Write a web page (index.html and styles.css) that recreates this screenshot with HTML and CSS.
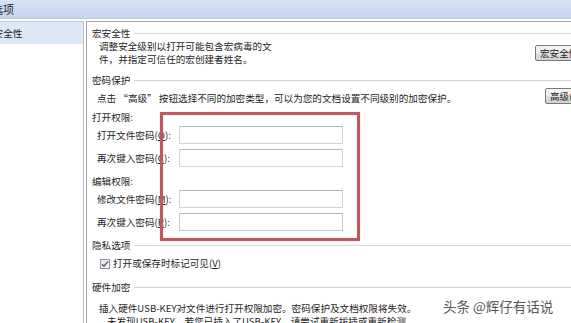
FILE: index.html
```html
<!DOCTYPE html>
<html lang="zh-CN">
<head>
<meta charset="utf-8">
<title>选项</title>
<link rel="stylesheet" href="styles.css">
</head>
<body>
<div class="window">
  <div class="titlebar"><span class="title">选项</span></div>
  <div class="main">
    <aside class="sidebar">
      <div class="nav-item active"><span class="nav-text">宏安全性</span></div>
    </aside>
    <section class="panel">
      <div class="group-title">宏安全性</div>
      <div class="macro-row">
        <p class="desc">调整安全级别以打开可能包含宏病毒的文<br>件，并指定可信任的宏创建者姓名。</p>
        <button class="btn btn-macro">宏安全性(<u>S</u>)...</button>
      </div>

      <div class="group-title gt-gap">密码保护</div>
      <div class="pw-row">
        <p class="pw-desc">点击 “高级” 按钮选择不同的加密类型，可以为您的文档设置不同级别的加密保护。</p>
        <button class="btn btn-adv">高级(<u>A</u>)...</button>
      </div>

      <div class="sub-title">打开权限:</div>
      <div class="form-row first">
        <label class="field-label">打开文件密码(<u>O</u>):</label>
        <input class="field" type="password">
      </div>
      <div class="form-row">
        <label class="field-label">再次键入密码(<u>C</u>):</label>
        <input class="field" type="password">
      </div>

      <div class="sub-title sub-gap">编辑权限:</div>
      <div class="form-row first">
        <label class="field-label">修改文件密码(<u>M</u>):</label>
        <input class="field" type="password">
      </div>
      <div class="form-row">
        <label class="field-label">再次键入密码(<u>R</u>):</label>
        <input class="field focus" type="password">
      </div>

      <div class="group-title gt-gap">隐私选项</div>
      <div class="check-row">
        <span class="checkbox">
          <svg width="8" height="8" viewBox="0 0 8 8"><path d="M1 4.2 L3 6.3 L7 1.4" fill="none" stroke="#4a5d7e" stroke-width="1.4"/></svg>
        </span>
        <span>打开或保存时标记可见(<u>V</u>)</span>
      </div>

      <div class="group-title hw-gap">硬件加密</div>
      <p class="usb-desc">插入硬件USB-KEY对文件进行打开权限加密。密码保护及文档权限将失效。</p>
      <p class="usb-desc second">未发现USB-KEY，若您已插入了USB-KEY，请尝试重新拔插或重新检测。</p>
    </section>
  </div>
  <div class="annot"></div>
  <div class="watermark">头条 @辉仔有话说</div>
</div>
</body>
</html>
```

FILE: styles.css
```css
* { box-sizing: border-box; }

body {
  margin: 0;
  width: 571px;
  height: 323px;
  overflow: hidden;
  background: #ffffff;
  font-family: "Noto Sans CJK SC", "Noto Sans", sans-serif;
  font-size: 9.6px;
  color: #1e1e1e;
}

.window {
  position: relative;
  width: 620px;
  height: 323px;
  background: #ffffff;
}

.titlebar {
  height: 19px;
  background: linear-gradient(#d7e4f3, #c3d6ec);
  border-bottom: 1px solid #b9cadd;
  display: flex;
  align-items: center;
  white-space: nowrap;
}

.title {
  margin-left: -8px;
  font-size: 11px;
  line-height: 16px;
  color: #1e1e1e;
}

.main {
  display: flex;
  gap: 2px;
  padding-top: 2px;
}

.sidebar {
  width: 84px;
  height: 320px;
  border-top: 1px solid #c3c8ce;
  border-right: 1px solid #b9bec4;
}

.nav-item {
  height: 22px;
  line-height: 22px;
  white-space: nowrap;
}

.nav-item.active {
  background: #dce8f6;
}

.nav-text {
  display: inline-block;
  margin-left: -16px;
}

.panel {
  flex: 1;
  border-top: 1px solid #a3a3a3;
  border-left: 1px solid #a3a3a3;
  padding: 5px 15px 0 5px;
  display: flex;
  flex-direction: column;
}

.group-title {
  display: flex;
  align-items: center;
  gap: 4px;
  height: 13px;
  line-height: 13px;
  white-space: nowrap;
}

.group-title::after {
  content: "";
  flex: 1;
  height: 1px;
  background: #d3d6d9;
}

.gt-gap { margin-top: 8px; }
.hw-gap { margin-top: 11px; }

.macro-row {
  display: flex;
  align-items: center;
  justify-content: space-between;
  height: 26px;
  padding-left: 7px;
}

.desc {
  margin: 0;
  line-height: 13px;
}

.btn {
  font-family: inherit;
  font-size: 9.6px;
  color: #1e1e1e;
  height: 16px;
  padding: 0 4px;
  text-align: left;
  white-space: nowrap;
  border: 1px solid #7a7a7a;
  border-radius: 2px;
  background: linear-gradient(#f4f4f4, #ececec 50%, #dedede 50%, #d2d2d2);
  line-height: 14px;
}

.btn-macro { width: 70px; }
.btn-adv { width: 62px; margin-right: -2px; }

.pw-row {
  display: flex;
  align-items: flex-start;
  justify-content: space-between;
  height: 17px;
  margin-top: 1px;
  padding-left: 5px;
}

.pw-desc {
  margin: 4px 0 0;
  line-height: 13px;
  white-space: nowrap;
}

.sub-title {
  height: 13px;
  line-height: 13px;
  margin-top: 6px;
}

.sub-gap { margin-top: 8px; }

.form-row {
  display: flex;
  align-items: center;
  height: 18px;
  margin-top: 5px;
  padding-left: 5px;
}

.form-row.first { margin-top: 2px; }

.field-label {
  width: 82px;
  line-height: 18px;
  white-space: nowrap;
}

.field {
  width: 164px;
  height: 18px;
  margin: 0;
  padding: 0;
  background: #ffffff;
  border: 1px solid #d2d4d7;
  border-top-color: #b5b8bd;
  outline: none;
}

.field.focus {
  border-color: #bcc9d6;
  border-top-color: #a9b9ca;
}

.check-row {
  display: flex;
  align-items: center;
  gap: 3px;
  height: 13px;
  line-height: 13px;
  margin-top: 5px;
  padding-left: 8px;
}

.checkbox {
  width: 10px;
  height: 10px;
  display: flex;
  align-items: center;
  justify-content: center;
  border: 1px solid #8f9296;
  background: linear-gradient(135deg, #e3e5e8, #f8f8f8);
}

.usb-desc {
  margin: 8px 0 0;
  padding-left: 7px;
  line-height: 13px;
  white-space: nowrap;
}

.usb-desc.second {
  margin-top: 0;
  padding-left: 15px;
}

.annot {
  position: absolute;
  left: 160px;
  top: 112px;
  width: 200px;
  height: 129px;
  border: 3px solid #bc5a60;
  box-shadow: 0 0 1px rgba(200, 110, 115, 0.6), inset 0 0 1px rgba(200, 110, 115, 0.6);
}

.watermark {
  position: absolute;
  left: 443px;
  top: 297px;
  font-size: 13.5px;
  line-height: 18px;
  color: #575757;
  white-space: nowrap;
  text-shadow: 0 0 2px #ffffff;
}
```
